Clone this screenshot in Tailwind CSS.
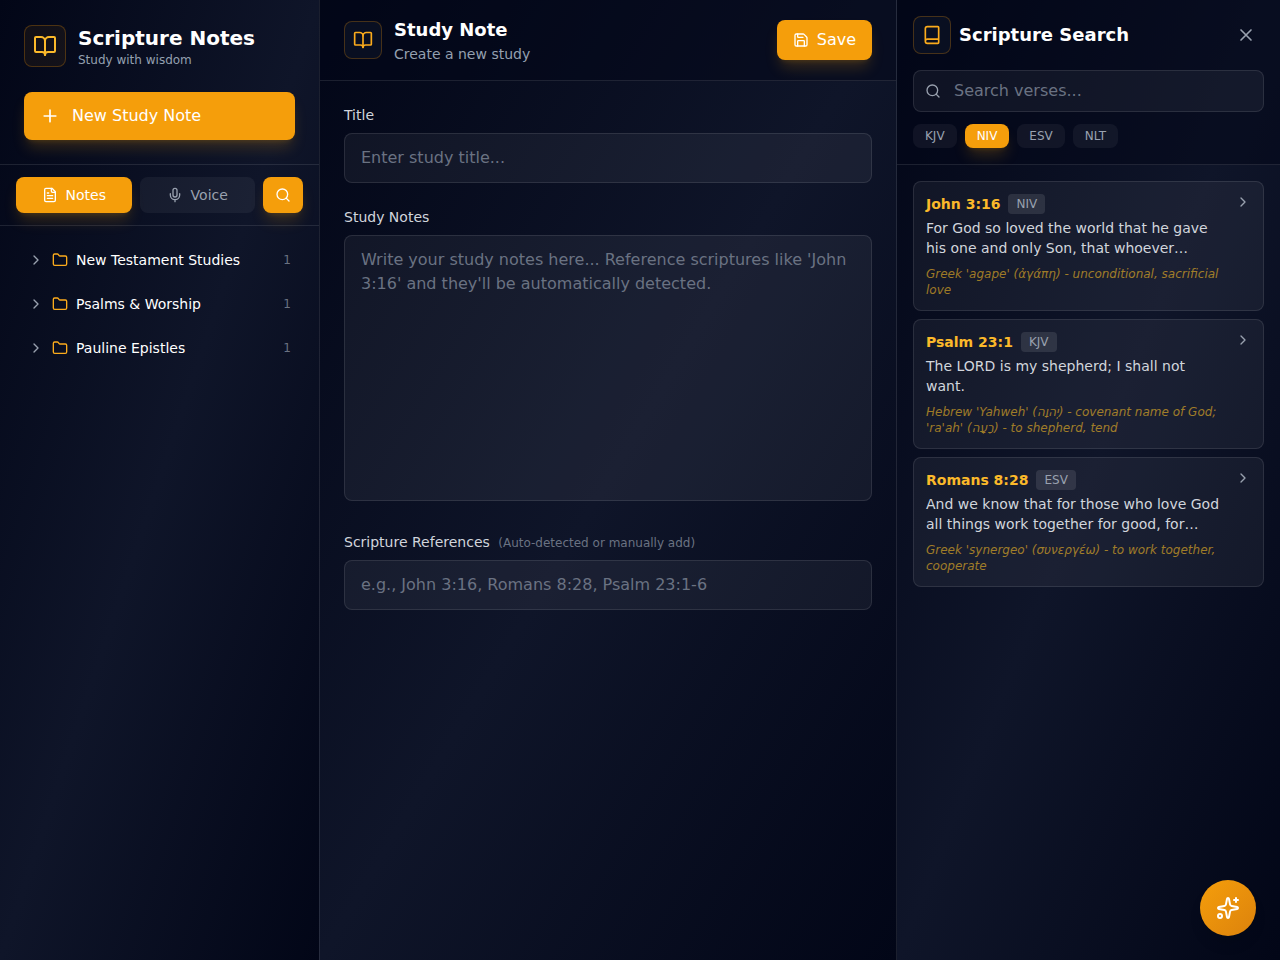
<!DOCTYPE html>
<html lang="en">
<head>
<meta charset="utf-8">
<meta name="viewport" content="width=device-width, initial-scale=1">
<title>Scripture Notes</title>
<script src="https://cdn.jsdelivr.net/npm/@tailwindcss/browser@4"></script>
</head>
<body class="flex h-screen overflow-hidden bg-[#020617] font-['DejaVu_Sans',sans-serif] text-white">
<svg class="hidden" aria-hidden="true">
  <symbol id="book-open" viewBox="0 0 24 24"><path d="M12 7v14"/><path d="M3 18a1 1 0 0 1-1-1V4a1 1 0 0 1 1-1h5a4 4 0 0 1 4 4 4 4 0 0 1 4-4h5a1 1 0 0 1 1 1v13a1 1 0 0 1-1 1h-6a3 3 0 0 0-3 3 3 3 0 0 0-3-3z"/></symbol>
  <symbol id="book" viewBox="0 0 24 24"><path d="M4 19.5v-15A2.5 2.5 0 0 1 6.5 2H19a1 1 0 0 1 1 1v18a1 1 0 0 1-1 1H6.5a1 1 0 0 1 0-5H20"/></symbol>
  <symbol id="chevron" viewBox="0 0 24 24"><path d="m9 18 6-6-6-6"/></symbol>
  <symbol id="folder" viewBox="0 0 24 24"><path d="M20 20a2 2 0 0 0 2-2V8a2 2 0 0 0-2-2h-7.9a2 2 0 0 1-1.69-.9L9.6 3.9A2 2 0 0 0 7.93 3H4a2 2 0 0 0-2 2v13a2 2 0 0 0 2 2Z"/></symbol>
  <symbol id="search" viewBox="0 0 24 24"><circle cx="11" cy="11" r="8"/><path d="m21 21-4.3-4.3"/></symbol>
</svg>

<aside class="flex w-80 shrink-0 flex-col border-r border-white/10 bg-linear-to-br/srgb from-[#020617] via-[#0f1529] to-[#020617]">
  <header class="border-b border-white/10 p-6">
    <div class="flex items-center gap-3">
      <div class="rounded-lg border border-amber-500/25 bg-amber-500/6 p-2 text-[#fbb92a]">
        <svg class="size-6 fill-none stroke-current stroke-2 [stroke-linecap:round] [stroke-linejoin:round]"><use href="#book-open"/></svg>
      </div>
      <div>
        <h1 class="text-xl font-bold">Scripture Notes</h1>
        <p class="text-xs text-[#94a0b0]">Study with wisdom</p>
      </div>
    </div>
    <button type="button" class="mt-6 flex h-12 w-full items-center gap-3 rounded-lg bg-[#f59e0b] px-4 shadow-lg shadow-[#f59e0b]/20">
      <svg viewBox="0 0 24 24" class="size-5 fill-none stroke-current stroke-2 [stroke-linecap:round]"><path d="M5 12h14M12 5v14"/></svg>
      New Study Note
    </button>
  </header>
  <div class="flex gap-2 border-b border-white/10 px-4 py-3 text-sm">
    <button type="button" class="flex h-9 flex-1 items-center justify-center gap-2 rounded-lg bg-[#f59e0b] shadow-lg shadow-[#f59e0b]/20">
      <svg viewBox="0 0 24 24" class="size-4 fill-none stroke-current stroke-2 [stroke-linecap:round] [stroke-linejoin:round]"><path d="M15 2H6a2 2 0 0 0-2 2v16a2 2 0 0 0 2 2h12a2 2 0 0 0 2-2V7Z"/><path d="M14 2v4a2 2 0 0 0 2 2h4M10 9H8M16 13H8M16 17H8"/></svg>
      Notes
    </button>
    <button type="button" class="flex h-9 flex-1 items-center justify-center gap-2 rounded-lg bg-white/5 text-gray-400">
      <svg viewBox="0 0 24 24" class="size-4 fill-none stroke-current stroke-2 [stroke-linecap:round] [stroke-linejoin:round]"><path d="M12 2a3 3 0 0 0-3 3v7a3 3 0 0 0 6 0V5a3 3 0 0 0-3-3Z"/><path d="M19 10v2a7 7 0 0 1-14 0v-2M12 19v3"/></svg>
      Voice
    </button>
    <button type="button" aria-label="Search" class="flex h-9 w-10 items-center justify-center rounded-lg bg-[#f59e0b] shadow-lg shadow-[#f59e0b]/20">
      <svg class="size-4 fill-none stroke-current stroke-2 [stroke-linecap:round]"><use href="#search"/></svg>
    </button>
  </div>
  <nav class="flex flex-1 flex-col gap-2 p-4 text-sm">
    <button type="button" class="flex h-9 items-center gap-2 px-3 text-left">
      <svg class="size-4 fill-none stroke-gray-400 stroke-2 [stroke-linecap:round] [stroke-linejoin:round]"><use href="#chevron"/></svg>
      <svg class="size-4 fill-none stroke-[#fbab1c] stroke-2 [stroke-linecap:round] [stroke-linejoin:round]"><use href="#folder"/></svg>
      <span class="flex-1">New Testament Studies</span><span class="text-xs text-gray-500">1</span>
    </button>
    <button type="button" class="flex h-9 items-center gap-2 px-3 text-left">
      <svg class="size-4 fill-none stroke-gray-400 stroke-2 [stroke-linecap:round] [stroke-linejoin:round]"><use href="#chevron"/></svg>
      <svg class="size-4 fill-none stroke-[#fbab1c] stroke-2 [stroke-linecap:round] [stroke-linejoin:round]"><use href="#folder"/></svg>
      <span class="flex-1">Psalms &amp; Worship</span><span class="text-xs text-gray-500">1</span>
    </button>
    <button type="button" class="flex h-9 items-center gap-2 px-3 text-left">
      <svg class="size-4 fill-none stroke-gray-400 stroke-2 [stroke-linecap:round] [stroke-linejoin:round]"><use href="#chevron"/></svg>
      <svg class="size-4 fill-none stroke-[#fbab1c] stroke-2 [stroke-linecap:round] [stroke-linejoin:round]"><use href="#folder"/></svg>
      <span class="flex-1">Pauline Epistles</span><span class="text-xs text-gray-500">1</span>
    </button>
  </nav>
</aside>

<main class="flex min-w-0 flex-1 flex-col bg-linear-to-br/srgb from-[#020617] via-[#0f1529] to-[#020617]">
  <header class="flex items-center gap-3 border-b border-white/10 bg-[#020617]/50 px-6 py-4">
    <div class="rounded-lg border border-amber-500/25 bg-[#0f172a]/50 p-2 text-[#fbab1c]">
      <svg class="size-5 fill-none stroke-current stroke-2 [stroke-linecap:round] [stroke-linejoin:round]"><use href="#book-open"/></svg>
    </div>
    <div class="flex-1">
      <h2 class="text-lg font-bold">Study Note</h2>
      <p class="text-sm text-[#94a0b0]">Create a new study</p>
    </div>
    <button type="button" class="flex h-10 items-center gap-2 rounded-lg bg-[#f59e0b] px-4 shadow-lg shadow-[#f59e0b]/20">
      <svg viewBox="0 0 24 24" class="size-4 fill-none stroke-current stroke-2 [stroke-linecap:round] [stroke-linejoin:round]"><path d="M15.2 3a2 2 0 0 1 1.4.6l3.8 3.8a2 2 0 0 1 .6 1.4V19a2 2 0 0 1-2 2H5a2 2 0 0 1-2-2V5a2 2 0 0 1 2-2z"/><path d="M17 21v-7a1 1 0 0 0-1-1H8a1 1 0 0 0-1 1v7M7 3v4a1 1 0 0 0 1 1h7"/></svg>
      Save
    </button>
  </header>
  <form class="flex flex-col gap-6 p-6">
    <div>
      <label for="title" class="mb-2 block text-sm text-gray-300">Title</label>
      <input id="title" type="text" placeholder="Enter study title..." class="block w-full rounded-lg border border-white/10 bg-white/5 px-4 py-3 placeholder:text-gray-500">
    </div>
    <div>
      <label for="notes" class="mb-2 block text-sm text-gray-300">Study Notes</label>
      <textarea id="notes" rows="10" placeholder="Write your study notes here... Reference scriptures like 'John 3:16' and they'll be automatically detected." class="w-full resize-none rounded-lg border border-white/10 bg-white/5 px-4 py-3 align-baseline placeholder:text-gray-500"></textarea>
    </div>
    <div>
      <label for="refs" class="mb-2 block text-sm text-gray-300">Scripture References <span class="ml-1 text-xs text-gray-500">(Auto-detected or manually add)</span></label>
      <input id="refs" type="text" placeholder="e.g., John 3:16, Romans 8:28, Psalm 23:1-6" class="block w-full rounded-lg border border-white/10 bg-white/5 px-4 py-3 placeholder:text-gray-500">
    </div>
  </form>
</main>

<aside class="flex w-96 shrink-0 flex-col border-l border-white/10 bg-linear-to-br/srgb from-[#020617] via-[#0f1529] to-[#020617]">
  <header class="border-b border-white/10 bg-[#020617]/50 p-4">
    <div class="flex items-center gap-2">
      <div class="rounded-lg border border-amber-500/25 bg-[#0f172a]/50 p-2 text-[#fbab1c]">
        <svg class="size-5 fill-none stroke-current stroke-2 [stroke-linecap:round] [stroke-linejoin:round]"><use href="#book"/></svg>
      </div>
      <h2 class="flex-1 text-lg font-bold">Scripture Search</h2>
      <button type="button" aria-label="Close" class="flex size-9 items-center justify-center text-gray-400">
        <svg viewBox="0 0 24 24" class="size-5 fill-none stroke-current stroke-2 [stroke-linecap:round]"><path d="M18 6 6 18M6 6l12 12"/></svg>
      </button>
    </div>
    <div class="relative mt-4">
      <svg class="pointer-events-none absolute inset-y-0 left-3 my-auto size-4 fill-none stroke-gray-400 stroke-2 [stroke-linecap:round]"><use href="#search"/></svg>
      <input type="text" aria-label="Search verses" placeholder="Search verses..." class="block w-full rounded-lg border border-white/10 bg-white/5 py-2 pr-4 pl-10 placeholder:text-gray-500">
    </div>
    <div class="mt-3 flex gap-2 text-xs text-gray-400">
      <button type="button" class="rounded-lg bg-white/5 px-3 py-1">KJV</button>
      <button type="button" class="rounded-lg bg-[#f59e0b] px-3 py-1 text-white shadow-lg shadow-[#f59e0b]/20">NIV</button>
      <button type="button" class="rounded-lg bg-white/5 px-3 py-1">ESV</button>
      <button type="button" class="rounded-lg bg-white/5 px-3 py-1">NLT</button>
    </div>
  </header>
  <div class="flex flex-col gap-2 p-4">
    <article class="flex items-start gap-2 rounded-lg border border-white/10 bg-white/5 p-3">
      <div class="min-w-0 flex-1">
        <div class="mb-1 flex items-center gap-2"><h3 class="text-sm font-bold text-[#fbb92a]">John 3:16</h3><span class="rounded bg-white/10 px-2 py-0.5 text-xs text-gray-400">NIV</span></div>
        <p class="text-sm text-gray-300">For God so loved the world that he gave his one and only Son, that whoever…</p>
        <p class="mt-2 text-xs text-[#fbbf24]/60 italic">Greek 'agape' (ἀγάπη) - unconditional, sacrificial love</p>
      </div>
      <svg class="size-4 shrink-0 fill-none stroke-gray-400 stroke-2 [stroke-linecap:round] [stroke-linejoin:round]"><use href="#chevron"/></svg>
    </article>
    <article class="flex items-start gap-2 rounded-lg border border-white/10 bg-white/5 p-3">
      <div class="min-w-0 flex-1">
        <div class="mb-1 flex items-center gap-2"><h3 class="text-sm font-bold text-[#fbb92a]">Psalm 23:1</h3><span class="rounded bg-white/10 px-2 py-0.5 text-xs text-gray-400">KJV</span></div>
        <p class="text-sm text-gray-300">The LORD is my shepherd; I shall not want.</p>
        <p class="mt-2 text-xs text-[#fbbf24]/60 italic">Hebrew 'Yahweh' (יְהוָה) - covenant name of God; 'ra'ah' (רָעָה) - to shepherd, tend</p>
      </div>
      <svg class="size-4 shrink-0 fill-none stroke-gray-400 stroke-2 [stroke-linecap:round] [stroke-linejoin:round]"><use href="#chevron"/></svg>
    </article>
    <article class="flex items-start gap-2 rounded-lg border border-white/10 bg-white/5 p-3">
      <div class="min-w-0 flex-1">
        <div class="mb-1 flex items-center gap-2"><h3 class="text-sm font-bold text-[#fbb92a]">Romans 8:28</h3><span class="rounded bg-white/10 px-2 py-0.5 text-xs text-gray-400">ESV</span></div>
        <p class="text-sm text-gray-300">And we know that for those who love God all things work together for good, for…</p>
        <p class="mt-2 text-xs text-[#fbbf24]/60 italic">Greek 'synergeo' (συνεργέω) - to work together, cooperate</p>
      </div>
      <svg class="size-4 shrink-0 fill-none stroke-gray-400 stroke-2 [stroke-linecap:round] [stroke-linejoin:round]"><use href="#chevron"/></svg>
    </article>
  </div>
</aside>

<button type="button" aria-label="Assistant" class="fixed right-6 bottom-6 flex size-14 items-center justify-center rounded-full bg-linear-to-br/srgb from-[#f59e0b] to-[#dc820c] shadow-lg shadow-black/10">
  <svg viewBox="0 0 24 24" class="size-6 fill-none stroke-current stroke-2 [stroke-linecap:round] [stroke-linejoin:round]"><path d="M11.017 2.814a1 1 0 0 1 1.966 0l1.051 5.558a2 2 0 0 0 1.594 1.594l5.558 1.051a1 1 0 0 1 0 1.966l-5.558 1.051a2 2 0 0 0-1.594 1.594l-1.051 5.558a1 1 0 0 1-1.966 0l-1.051-5.558a2 2 0 0 0-1.594-1.594l-5.558-1.051a1 1 0 0 1 0-1.966l5.558-1.051a2 2 0 0 0 1.594-1.594z"/><path d="M20 2v4M22 4h-4"/><circle cx="4" cy="20" r="2"/></svg>
</button>
</body>
</html>
